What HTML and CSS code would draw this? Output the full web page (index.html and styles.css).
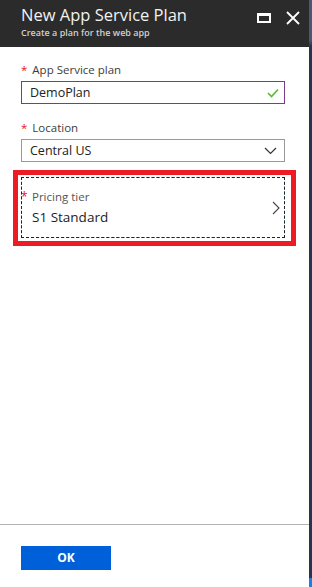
FILE: index.html
```html
<!DOCTYPE html>
<html lang="en">
<head>
    <meta charset="UTF-8">
    <meta name="viewport" content="width=device-width, initial-scale=1.0">
    <title>New App Service Plan</title>
    <link rel="stylesheet" href="styles.css">
</head>
<body>

    <div class="blade">
        <div class="header">
            <div class="titles">
                <div class="title">New App Service Plan</div>
                <div class="subtitle">Create a plan for the web app</div>
            </div>
            <div class="controls">
                <span class="maximize"></span>
                <svg class="close" width="14" height="14" viewBox="0 0 14 14">
                    <path d="M1 1 L13 13 M13 1 L1 13" stroke="#fff" stroke-width="1.8"/>
                </svg>
            </div>
        </div>

        <div class="content">
            <div class="field">
                <div class="label"><span class="req">*</span>App Service plan</div>
                <div class="input focused">
                    <span>DemoPlan</span>
                    <svg width="12" height="10" viewBox="0 0 12 10">
                        <path d="M1 5 L4.5 8.5 L11 1.5" stroke="#5db835" stroke-width="1.6" fill="none"/>
                    </svg>
                </div>
            </div>

            <div class="field">
                <div class="label"><span class="req">*</span>Location</div>
                <div class="input select">
                    <span>Central US</span>
                    <svg width="13" height="8" viewBox="0 0 13 8">
                        <path d="M1 1 L6.5 6.5 L12 1" stroke="#333" stroke-width="1.2" fill="none"/>
                    </svg>
                </div>
            </div>

            <div class="highlight">
                <div class="tier">
                    <span class="req tier-req">*</span>
                    <div class="tier-text">
                        <div class="tier-label">Pricing tier</div>
                        <div class="tier-value">S1 Standard</div>
                    </div>
                    <svg width="8" height="14" viewBox="0 0 8 14">
                        <path d="M1 1 L7 7 L1 13" stroke="#444" stroke-width="1.1" fill="none"/>
                    </svg>
                </div>
            </div>
        </div>

        <div class="footer">
            <button type="button">OK</button>
        </div>
    </div>
    <div class="edge"></div>

</body>
</html>
```

FILE: styles.css
```css
* {
    box-sizing: border-box;
}
body {
    margin: 0;
    display: flex;
    height: 587px;
    font-family: "Open Sans", "Noto Sans", sans-serif;
    background-color: #fff;
    overflow: hidden;
}
.blade {
    width: 309px;
    display: flex;
    flex-direction: column;
    background-color: #fff;
}
.edge {
    flex: 1;
    background: linear-gradient(#4a5878 0, #4a5878 40px, #29344f 46px, #29344f 578px, #1a7fe0 578px);
}
.header {
    height: 47px;
    background-color: #2b2b2b;
    display: flex;
    justify-content: space-between;
    padding: 0 9px 0 21px;
}
.titles {
    padding-top: 3px;
}
.title {
    color: #f2f2f2;
    font-size: 16.5px;
    line-height: 24px;
}
.subtitle {
    color: #cfcfcf;
    font-size: 9px;
    font-weight: 600;
    line-height: 12px;
}
.controls {
    display: flex;
    align-items: center;
    gap: 15px;
    height: 35px;
}
.maximize {
    width: 14px;
    height: 10px;
    border: 2px solid #fff;
    border-top-width: 3px;
}
.content {
    flex: 1;
    padding: 15px 13px 0 13px;
}
.field {
    padding: 0 11px 0 8px;
    margin-bottom: 16px;
}
.label {
    font-size: 11.5px;
    color: #3c3c3c;
    line-height: 16px;
    margin-bottom: 3px;
}
.req {
    color: #e81123;
    margin-right: 5px;
}
.input {
    height: 23px;
    border: 1px solid #999;
    display: flex;
    align-items: center;
    justify-content: space-between;
    padding: 0 5px 0 8px;
    font-size: 12.5px;
    color: #222;
}
.input.focused {
    border-color: #7a3b8c;
}
.select {
    padding-right: 7px;
}
.highlight {
    border: 5px solid #ed1c24;
    padding: 2px 6px 3px 3px;
    margin-top: -8px;
}
.tier {
    position: relative;
    height: 61px;
    border: 1px dashed #0aa8dc;
    outline: 1px dashed #222;
    outline-offset: -1px;
    display: flex;
    align-items: center;
    padding: 0 4px 0 10px;
}
.tier-req {
    position: absolute;
    left: -1px;
    top: 10px;
    font-size: 12px;
}
.tier-text {
    flex: 1;
}
.tier-label {
    font-size: 11.5px;
    color: #555;
    line-height: 18px;
}
.tier-value {
    font-size: 13.5px;
    color: #222;
    line-height: 22px;
}
.footer {
    height: 63px;
    border-top: 1px solid #b3b3b3;
    padding: 20px 21px 0 21px;
}
button {
    width: 90px;
    height: 24px;
    background-color: #0060da;
    color: white;
    border: none;
    font-family: "Open Sans", sans-serif;
    font-weight: bold;
    font-size: 12px;
    cursor: pointer;
}
```
